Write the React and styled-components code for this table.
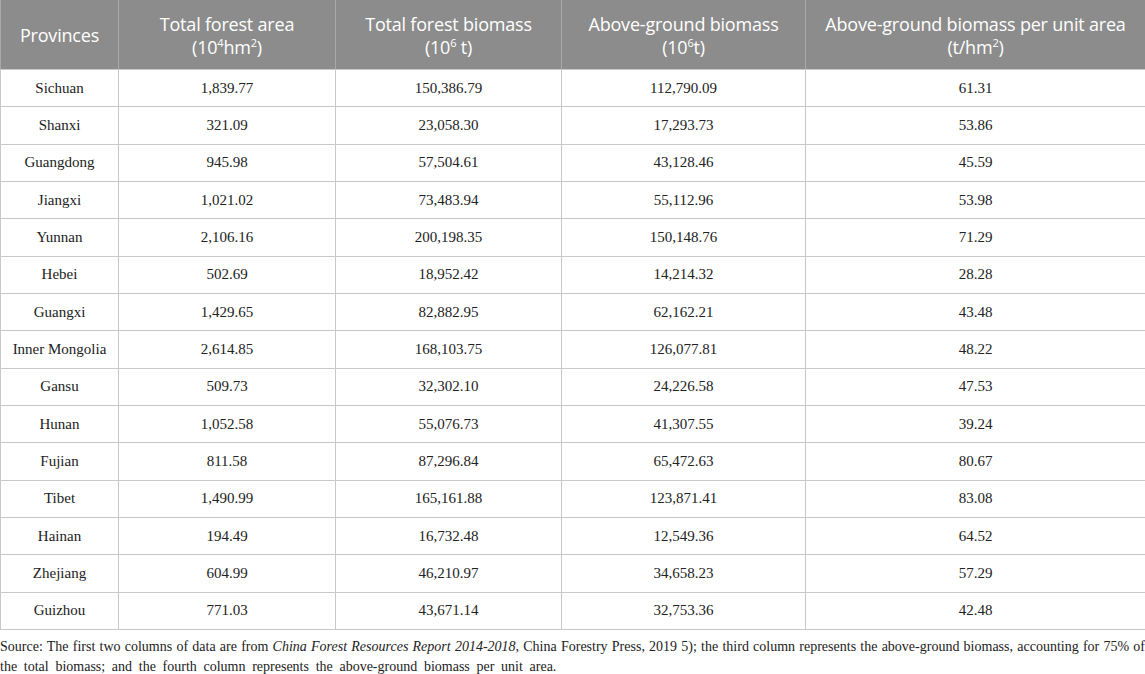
import React from 'react';
import styled, { createGlobalStyle } from 'styled-components';

const GlobalStyle = createGlobalStyle`
  html, body {
    margin: 0;
    padding: 0;
    background: #ffffff;
  }
`;

const Page = styled.div`
  width: 1145px;
  display: flex;
  flex-direction: column;
`;

const Table = styled.table`
  width: 1145px;
  border-collapse: collapse;
  table-layout: fixed;
`;

const Col = styled.col`
  width: ${p => p.$w}px;
`;

const HeadCell = styled.th`
  height: 67px;
  padding: 2px 4px 0;
  background-color: #8c8c8c;
  border-left: 1px solid #a8a8a8;
  border-right: 1px solid #a8a8a8;
  border-bottom: 1px solid #c8c8c8;
  color: #ffffff;
  font-family: 'Open Sans', 'Noto Sans', sans-serif;
  font-weight: 400;
  font-size: 18px;
  line-height: 23px;
  letter-spacing: -0.2px;
  text-align: center;
  vertical-align: middle;

  sup {
    font-size: 11px;
    line-height: 0;
    vertical-align: 7px;
  }
`;

const Cell = styled.td`
  height: 36.35px;
  padding: 0 6px;
  border: 1px solid #c8c8c8;
  color: #222222;
  font-family: 'Liberation Serif', 'Times New Roman', serif;
  font-size: 15px;
  text-align: center;
  vertical-align: middle;
`;

const Footnote = styled.div`
  padding-top: 7px;
  color: #222222;
  font-family: 'Liberation Serif', 'Times New Roman', serif;
  font-size: 14px;
  line-height: 20px;
`;

const FootLine = styled.span`
  display: block;
  text-align: ${p => (p.$full ? 'justify' : 'left')};
  text-align-last: ${p => (p.$full ? 'justify' : 'left')};
  word-spacing: ${p => (p.$full ? 0 : 3.2)}px;
`;

const columns = [118, 217, 226, 244, 340];

const rows = [
  ['Sichuan', '1,839.77', '150,386.79', '112,790.09', '61.31'],
  ['Shanxi', '321.09', '23,058.30', '17,293.73', '53.86'],
  ['Guangdong', '945.98', '57,504.61', '43,128.46', '45.59'],
  ['Jiangxi', '1,021.02', '73,483.94', '55,112.96', '53.98'],
  ['Yunnan', '2,106.16', '200,198.35', '150,148.76', '71.29'],
  ['Hebei', '502.69', '18,952.42', '14,214.32', '28.28'],
  ['Guangxi', '1,429.65', '82,882.95', '62,162.21', '43.48'],
  ['Inner Mongolia', '2,614.85', '168,103.75', '126,077.81', '48.22'],
  ['Gansu', '509.73', '32,302.10', '24,226.58', '47.53'],
  ['Hunan', '1,052.58', '55,076.73', '41,307.55', '39.24'],
  ['Fujian', '811.58', '87,296.84', '65,472.63', '80.67'],
  ['Tibet', '1,490.99', '165,161.88', '123,871.41', '83.08'],
  ['Hainan', '194.49', '16,732.48', '12,549.36', '64.52'],
  ['Zhejiang', '604.99', '46,210.97', '34,658.23', '57.29'],
  ['Guizhou', '771.03', '43,671.14', '32,753.36', '42.48'],
];

export default function App() {
  return (
    <Page>
      <GlobalStyle />
      <Table>
        <colgroup>
          {columns.map((w, i) => (
            <Col key={i} $w={w} />
          ))}
        </colgroup>
        <thead>
          <tr>
            <HeadCell>Provinces</HeadCell>
            <HeadCell>
              Total forest area
              <br />
              (10<sup>4</sup>hm<sup>2</sup>)
            </HeadCell>
            <HeadCell>
              Total forest biomass
              <br />
              (10<sup>6</sup> t)
            </HeadCell>
            <HeadCell>
              Above-ground biomass
              <br />
              (10<sup>6</sup>t)
            </HeadCell>
            <HeadCell>
              Above-ground biomass per unit area
              <br />
              (t/hm<sup>2</sup>)
            </HeadCell>
          </tr>
        </thead>
        <tbody>
          {rows.map(r => (
            <tr key={r[0]}>
              {r.map((v, i) => (
                <Cell key={i}>{v}</Cell>
              ))}
            </tr>
          ))}
        </tbody>
      </Table>
      <Footnote>
        <FootLine $full>
          Source: The first two columns of data are from <i>China Forest Resources Report 2014-2018</i>, China
          Forestry Press, 2019 5); the third column represents the above-ground biomass, accounting for 75% of
        </FootLine>
        <FootLine>
          the total biomass; and the fourth column represents the above-ground biomass per unit area.
        </FootLine>
      </Footnote>
    </Page>
  );
}
